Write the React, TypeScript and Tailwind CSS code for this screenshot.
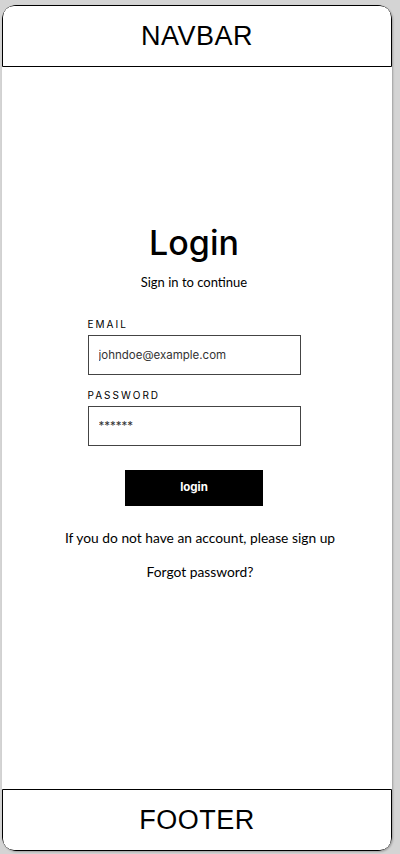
import { useState } from 'react';

export default function App() {
  const [email, setEmail] = useState('');
  const [password, setPassword] = useState('');

  return (
    <div className="h-[854px] bg-[#d4d4d4] pt-[5px] pl-[2px] pr-[8px] pb-[3px]">
      <div className="flex flex-col h-full bg-white rounded-[14px] overflow-hidden shadow-[1px_1px_2px_rgba(0,0,0,0.25)]">
        <div className="h-[62px] shrink-0 border-[1.5px] border-black rounded-t-[12px] flex items-center justify-center">
          <span className="text-[27px] text-black font-[family-name:Liberation_Sans,sans-serif] tracking-[0.5px]">NAVBAR</span>
        </div>

        <div className="flex-1 flex flex-col items-center pt-[156px] font-[family-name:Lato,sans-serif] text-black">
          <h1 className="text-[34px] leading-[40px] font-medium font-[family-name:Inter,sans-serif] ml-[-6px]">Login</h1>
          <div className="mt-[10px] text-[13px] ml-[-6px]">Sign in to continue</div>

          <form
            className="mt-[25px] w-[213px] ml-[-6px] flex flex-col font-[family-name:Inter,sans-serif]"
            onSubmit={(e) => {
              e.preventDefault();
            }}
          >
            <label className="text-[10px] tracking-[2px] leading-[12px] mb-[5px]">EMAIL</label>
            <input
              type="email"
              className="h-[40px] border border-[#444] px-[10px] text-[11.5px] text-[#333] placeholder:text-[#333] focus:outline-none"
              placeholder="johndoe@example.com"
              value={email}
              onChange={(e) => setEmail(e.target.value)}
            />
            <label className="mt-[14px] text-[10px] tracking-[2px] leading-[12px] mb-[5px]">PASSWORD</label>
            <input
              type="password"
              className="h-[40px] border border-[#444] px-[10px] text-[11.5px] text-[#333] placeholder:text-[#333] focus:outline-none"
              placeholder="******"
              value={password}
              onChange={(e) => setPassword(e.target.value)}
            />
            <button
              type="submit"
              className="mt-[24px] self-center w-[138px] h-[36px] bg-black text-white text-[11.5px] font-bold"
            >
              login
            </button>
          </form>

          <div className="mt-[22px] text-[13.8px] ml-[6px]">If you do not have an account, please sign up</div>
          <div className="mt-[14px] text-[13.8px] ml-[6px]">Forgot password?</div>
        </div>

        <div className="h-[62px] shrink-0 border-[1.5px] border-black rounded-b-[12px] flex items-center justify-center">
          <span className="text-[27px] text-black font-[family-name:Liberation_Sans,sans-serif] tracking-[0.5px]">FOOTER</span>
        </div>
      </div>
    </div>
  );
}
